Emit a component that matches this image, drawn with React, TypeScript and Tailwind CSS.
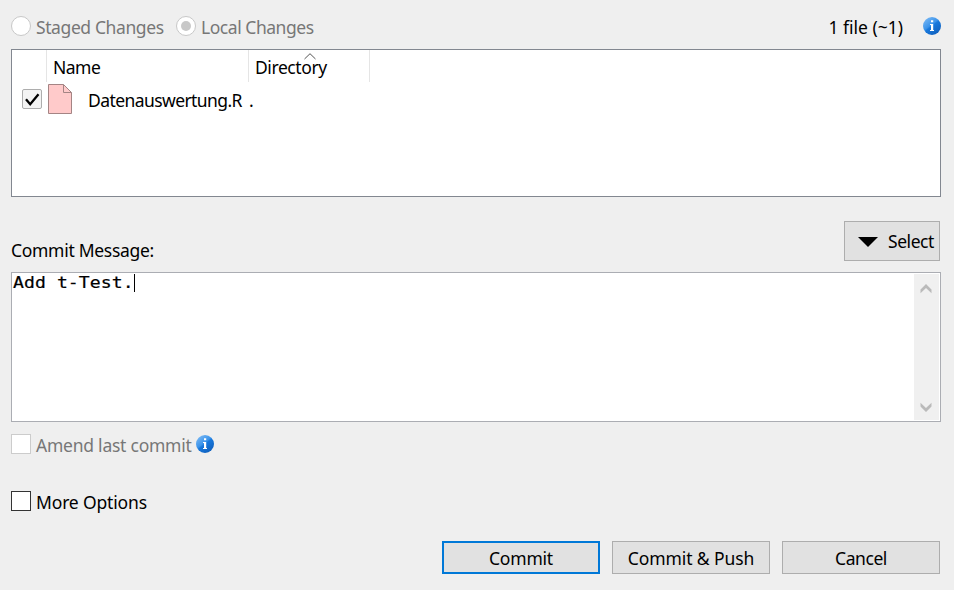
import React from "react";

function InfoIcon({ id }: { id: string }) {
  return (
    <svg width="18" height="18" viewBox="0 0 18 18" className="block shrink-0">
      <defs>
        <linearGradient id={id} x1="0.15" y1="0.1" x2="0.8" y2="0.95">
          <stop offset="0" stopColor="#72b4f3" />
          <stop offset="0.42" stopColor="#3b93ea" />
          <stop offset="0.5" stopColor="#1878dc" />
          <stop offset="1" stopColor="#1060bd" />
        </linearGradient>
      </defs>
      <circle cx="9" cy="9" r="9" fill={`url(#${id})`} />
      <path d="M8 3.2h2.2v2H8zM7 7h3.2v6H11v1H7v-1h1V8H7z" fill="#fff" />
    </svg>
  );
}

function Radio({ checked }: { checked?: boolean }) {
  return (
    <span className="flex size-5 shrink-0 items-center justify-center rounded-full border border-[#c8c8c8] bg-white">
      {checked && <span className="size-[10px] rounded-full bg-[#c8c8c8]" />}
    </span>
  );
}

function Chevron({ down }: { down?: boolean }) {
  return (
    <svg width="12" height="10" viewBox="0 0 12 10" className={down ? "rotate-180" : ""}>
      <path d="M0.5 5.5 6 0l5.500 5.500V9.300L6 4 0.500 9.300z" fill="#bababa" />
    </svg>
  );
}

export default function App() {
  return (
    <div className="flex h-[590px] w-[954px] flex-col overflow-hidden bg-[#efefef] pr-[13px] pl-[11px] font-['Noto_Sans',sans-serif] text-[17.5px] leading-6 whitespace-nowrap text-black">
      <header className="flex h-[49px] shrink-0 items-start pt-4 text-[#777]">
        <Radio />
        <span className="-mt-px ml-[5px] w-[140px] tracking-[-0.4px]">Staged Changes</span>
        <Radio checked />
        <span className="-mt-px ml-[5px] tracking-[-0.46px]">Local Changes</span>
        <span className="-mt-px ml-auto text-black">1 file (~1)</span>
        <span className="mt-px ml-5">
          <InfoIcon id="info-files" />
        </span>
      </header>

      <section className="h-[148px] w-[930px] shrink-0 border border-[#828790] bg-white">
        <div className="flex h-8">
          <div className="w-[35px] border-r border-[#e5e5e5]" />
          <div className="w-[202px] border-r border-[#e5e5e5] pt-[5px] pl-[6px] tracking-[-0.5px]">Name</div>
          <div className="relative w-[121px] border-r border-[#e5e5e5] pt-[5px] pl-[6px] tracking-[-0.42px]">
            Directory
            <svg width="12" height="7" viewBox="0 0 12 7" className="absolute top-[3px] left-[54.5px]">
              <path d="M.5 6 6 .7 11.500 6" fill="none" stroke="#555" />
            </svg>
          </div>
        </div>
        <div className="flex h-8 items-start pl-[10px]">
          <span className="mt-[7px] size-5 rounded-[2px] border border-[#adadad] bg-[#f3f3f3]">
            <svg width="18" height="18" viewBox="0 0 18 18">
              <path d="m3 9.200 4.200 5L15.500 4.300" fill="none" stroke="#000" strokeWidth="2.300" />
            </svg>
          </span>
          <svg width="24" height="30" viewBox="0 0 24 30" className="mt-[2px] ml-[6px]">
            <path d="M.5.5h15l8 8v21H.5z" fill="#ffcaca" stroke="#a48484" />
            <path d="M15.500.5v8h8" fill="none" stroke="#a48484" />
          </svg>
          <span className="mt-[6px] ml-4 w-[161px] tracking-[-0.58px]">Datenauswertung.R</span>
          <span className="mt-[6px]">.</span>
        </div>
      </section>

      <div className="flex h-[75px] shrink-0 items-start justify-between">
        <label className="mt-[41px] tracking-[-0.3px]">Commit Message:</label>
        <button className="mt-6 mr-[1px] flex h-10 w-24 items-center border border-[#adadad] bg-[#e1e1e1] pl-[13px]">
          <svg width="20" height="10" viewBox="0 0 20 10" className="mt-px">
            <path d="M0 0h20L10 10z" fill="#000" />
          </svg>
          <span className="ml-[10px] tracking-[-0.45px]">Select</span>
        </button>
      </div>

      <section className="flex h-[150px] w-[930px] shrink-0 justify-between border border-[#abadb3] bg-white p-px">
        <div className="flex items-start">
          <span className="-mt-[3px] w-[121px] origin-left scale-x-110 font-['DejaVu_Sans_Mono',monospace] text-[16.5px] tracking-[0.04px] [-webkit-text-stroke:0.2px_black]">Add t-Test.</span>
          <span className="h-[18px] w-px bg-black" />
        </div>
        <div className="flex w-[25px] flex-col items-start justify-between bg-[#f0f0f0] pt-[10px] pb-2 pl-[6px]">
          <Chevron />
          <Chevron down />
        </div>
      </section>

      <div className="mt-3 flex h-5 shrink-0 items-center text-[#777]">
        <span className="size-5 border border-[#ccc] bg-white" />
        <span className="ml-[5px] w-[160px] pt-px tracking-[-0.24px]">Amend last commit</span>
        <InfoIcon id="info-amend" />
      </div>
      <div className="mt-[37px] flex h-5 shrink-0 items-center">
        <span className="size-5 border border-[#333] bg-white" />
        <span className="ml-[5px] pt-px tracking-[-0.16px]">More Options</span>
      </div>

      <footer className="mt-[30px] mr-px flex h-[33px] shrink-0 justify-end gap-3">
        <button className="w-[158px] border-2 border-[#0078d7] bg-[#e1e1e1] tracking-[-0.2px]">Commit</button>
        <button className="w-[158px] border border-[#adadad] bg-[#e1e1e1] tracking-[-0.1px]">Commit &amp; Push</button>
        <button className="w-[158px] border border-[#adadad] bg-[#e1e1e1] tracking-[-0.45px]">Cancel</button>
      </footer>
    </div>
  );
}
